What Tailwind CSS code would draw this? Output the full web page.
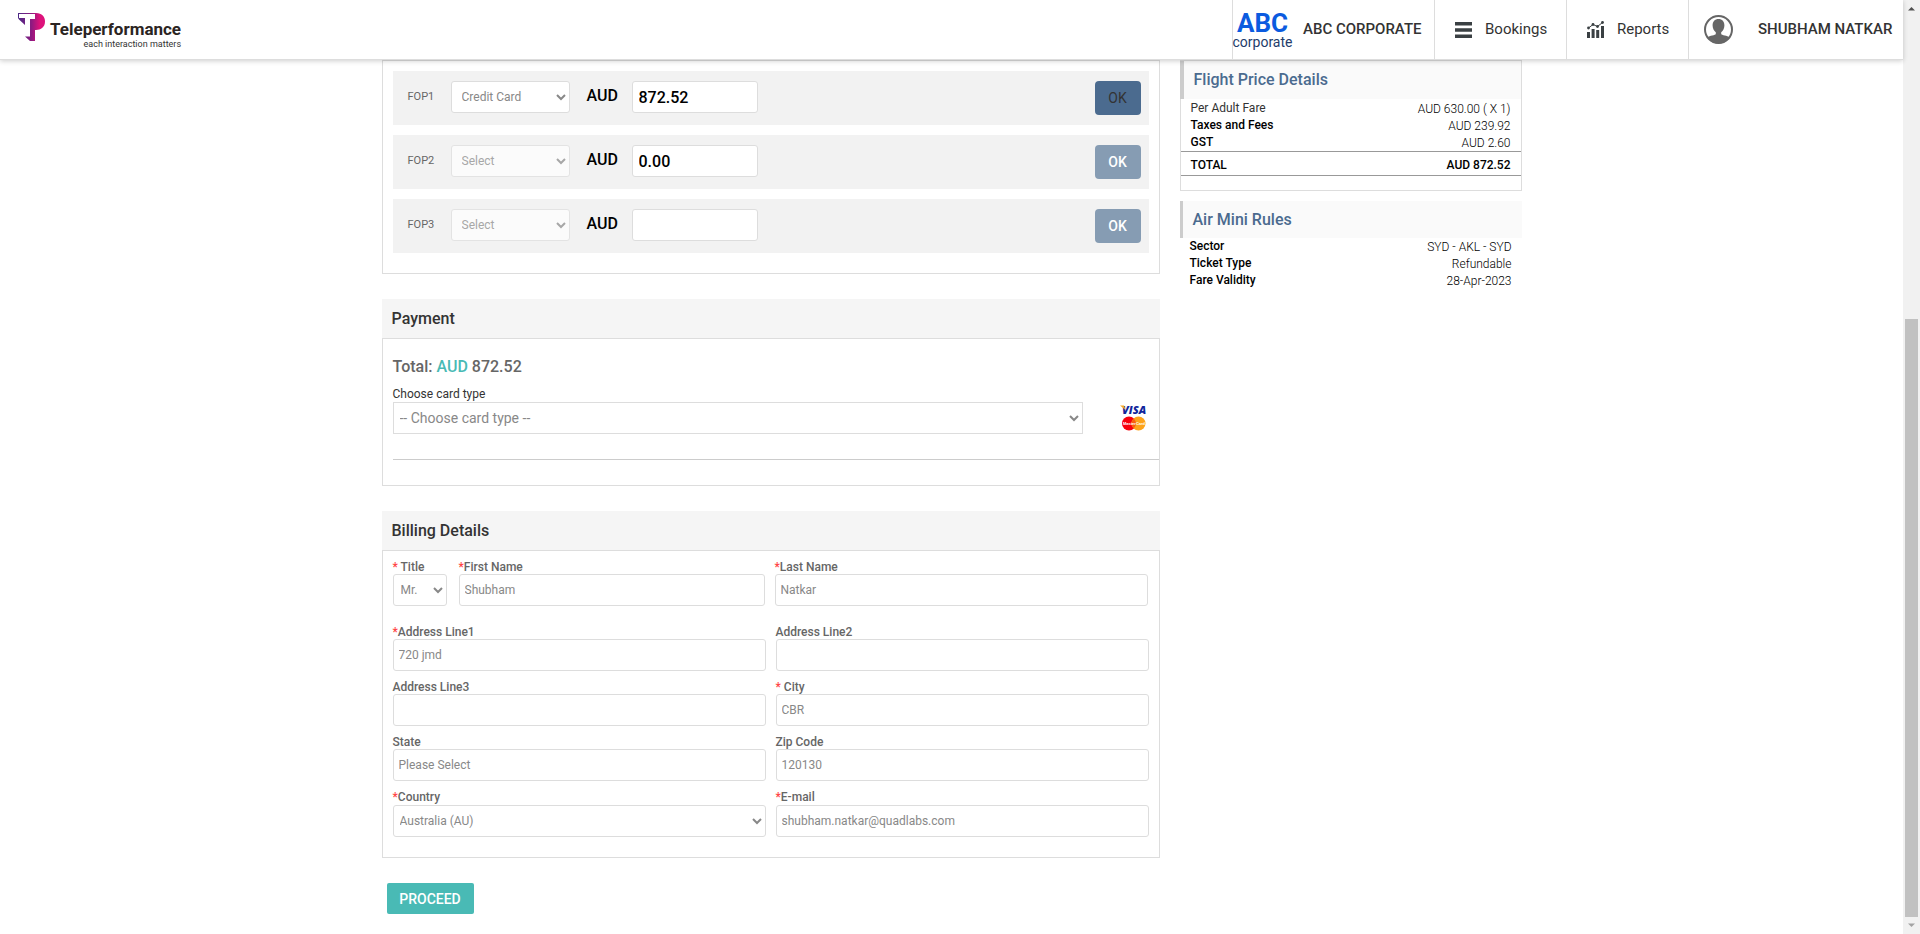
<!DOCTYPE html>
<html lang="en">
<head>
<meta charset="utf-8">
<meta name="viewport" content="width=device-width, initial-scale=1">
<title>Payment and Billing</title>
<script src="https://cdn.jsdelivr.net/npm/@tailwindcss/browser@4"></script>
</head>
<body class="flex min-h-screen bg-white font-[Roboto,'Open_Sans',sans-serif] text-xs text-[#333]">
<div class="min-w-0 flex-1">
  <header class="sticky top-0 z-10 flex h-15 items-stretch justify-between border-b border-[#ddd] bg-white shadow-[0_1px_5px_rgba(0,0,0,0.2)]">
    <a href="#" class="flex items-start gap-[5px] pt-3 pl-[18px]" aria-label="Teleperformance">
      <svg class="h-[29px] w-[27px]" viewBox="0 0 27 29">
        <defs><linearGradient id="tp" x1="0" x2="1"><stop offset="0" stop-color="#4b2a86"/><stop offset=".5" stop-color="#8e1a80"/><stop offset=".8" stop-color="#dd127b"/></linearGradient></defs>
        <path fill="url(#tp)" d="M0 1H18C24 1 27 5 27 9.500C27 15 23 18 18 18H17V29H12L7 24.500H12V7H17V2H1V6H7V13L1 7.500L0 6Z"/>
      </svg>
      <span class="flex flex-col items-end pt-[7px]">
        <span class="text-[17px] leading-5 font-bold text-[#2b2422]">Teleperformance</span>
        <span class="text-[9px] leading-[10px] text-[#333]">each interaction matters</span>
      </span>
    </a>
    <nav class="flex items-stretch text-[15px] text-[#333]">
      <a href="#" class="flex w-[202px] items-center border-l border-[#ddd]">
        <span class="flex w-[59px] flex-col items-center whitespace-nowrap">
          <span class="text-[26px] leading-6 font-bold text-[#0b5bdf]">ABC</span>
          <span class="text-sm leading-[14px] text-[#243c6b]">corporate</span>
        </span>
        <span class="pl-[11px] font-medium whitespace-nowrap">ABC CORPORATE</span>
      </a>
      <a href="#" class="flex w-[132px] items-center gap-[13px] border-l border-[#ddd] pl-5">
        <svg class="h-4 w-[17px]" viewBox="0 0 17 16" fill="#3a4043"><path d="M0 0h17v3.500H0zM0 6.200h17v3.500H0zM0 12.400h17v3.500H0z"/></svg>
        <span>Bookings</span>
      </a>
      <a href="#" class="flex w-[122px] items-center gap-[13px] border-l border-[#ddd] pl-5">
        <svg class="h-[17px] w-[17px]" viewBox="0 0 17 17" fill="#3a4043"><path d="M0 11h3v6H0zM4.600 8h3v9h-3zM9.200 9h3v8h-3zM14 5h3v12h-3z"/><path d="M1.500 7L6 3.500L10.500 5.500L15.500 1.500" fill="none" stroke="#3a4043"/><circle cx="1.500" cy="7" r="1.400"/><circle cx="6" cy="3.500" r="1.400"/><circle cx="10.500" cy="5.500" r="1.400"/><circle cx="15.500" cy="1.500" r="1.400"/></svg>
        <span>Reports</span>
      </a>
      <a href="#" class="flex w-[215px] items-center gap-[25px] border-l border-[#ddd] pl-[15px]">
        <svg class="h-[29px] w-[29px]" viewBox="0 0 29 29"><circle cx="14.500" cy="14.500" r="13.500" fill="#fff" stroke="#666" stroke-width="2"/><path fill="#666" d="M14.500 4C10.800 4 8.600 6.600 8.600 10.500C8.600 13.500 10 15.800 11.800 17.200V19C11.500 20.300 5.500 20.500 3.500 22.500C6.500 27 10.500 28.500 14.500 28.500S22.500 27 25.500 22.500C23.500 20.500 17.500 20.300 17.200 19V17.200C19 15.800 20.400 13.500 20.400 10.500C20.400 6.600 18.200 4 14.500 4Z"/></svg>
        <span class="font-medium whitespace-nowrap">SHUBHAM NATKAR</span>
      </a>
    </nav>
  </header>

  <main class="mx-auto flex max-w-[1140px] items-start gap-5">
    <form class="min-w-0 flex-1">
      <section class="flex flex-col gap-[10px] border border-[#ddd] px-[10px] pt-[10px] pb-5" aria-label="Forms of payment">
        <div class="flex items-start bg-[#f2f2f2] pt-[10px] pr-2 pb-3 pl-[15px]">
          <label for="fop1" class="w-[43px] pt-2 text-[11px] leading-4 text-[#666]">FOP1</label>
          <select id="fop1" class="h-8 w-[119px] rounded-[3px] border border-[#ddd] bg-white pl-[6px] text-[#888]"><option>Credit Card</option></select>
          <label for="amt1" class="w-[62px] pt-[5px] pl-[17px] text-base leading-5 font-medium text-black">AUD</label>
          <input id="amt1" type="text" value="872.52" class="h-8 w-[126px] rounded-[3px] border border-[#ddd] bg-white px-[6px] text-base font-medium text-black">
          <button type="button" class="-mb-0.5 ml-auto h-[34px] w-[46px] rounded bg-[#4b6b8f] text-sm text-[#333]">OK</button>
        </div>
        <div class="flex items-start bg-[#f2f2f2] pt-[10px] pr-2 pb-3 pl-[15px]">
          <label for="fop2" class="w-[43px] pt-2 text-[11px] leading-4 text-[#666]">FOP2</label>
          <select id="fop2" disabled class="h-8 w-[119px] rounded-[3px] border border-[#ddd] bg-white pl-[6px] text-[#888] opacity-70"><option>Select</option></select>
          <label for="amt2" class="w-[62px] pt-[5px] pl-[17px] text-base leading-5 font-medium text-black">AUD</label>
          <input id="amt2" type="text" value="0.00" class="h-8 w-[126px] rounded-[3px] border border-[#ddd] bg-white px-[6px] text-base font-medium text-black">
          <button type="button" class="-mb-0.5 ml-auto h-[34px] w-[46px] rounded bg-[#869cb3] text-sm font-medium text-white">OK</button>
        </div>
        <div class="flex items-start bg-[#f2f2f2] pt-[10px] pr-2 pb-3 pl-[15px]">
          <label for="fop3" class="w-[43px] pt-2 text-[11px] leading-4 text-[#666]">FOP3</label>
          <select id="fop3" disabled class="h-8 w-[119px] rounded-[3px] border border-[#ddd] bg-white pl-[6px] text-[#888] opacity-70"><option>Select</option></select>
          <label for="amt3" class="w-[62px] pt-[5px] pl-[17px] text-base leading-5 font-medium text-black">AUD</label>
          <input id="amt3" type="text" class="h-8 w-[126px] rounded-[3px] border border-[#ddd] bg-white px-[6px] text-base font-medium text-black">
          <button type="button" class="-mb-0.5 ml-auto h-[34px] w-[46px] rounded bg-[#869cb3] text-sm font-medium text-white">OK</button>
        </div>
      </section>

      <section class="mt-[25px]">
        <h2 class="bg-[#f5f5f5] px-[10px] text-base leading-[39px] font-medium text-[#333]">Payment</h2>
        <div class="border border-[#ddd] pb-[25px] pl-[10px]">
          <p class="pt-[18px] text-base leading-5 font-medium text-[#666]">Total: <span class="text-[#49bab5]">AUD</span> 872.52</p>
          <label for="card" class="block pt-[9px] leading-4">Choose card type</label>
          <div class="flex items-center pr-[11px]">
            <select id="card" class="h-8 min-w-0 flex-1 border border-[#ddd] bg-white pl-[2px] text-sm text-[#888]"><option>-- Choose card type --</option></select>
            <svg class="ml-[37px] h-7 w-7 overflow-visible" viewBox="0 0 28 28" role="img" aria-label="Visa and MasterCard">
              <text x="2" y="10" font-family="Open Sans, sans-serif" font-size="11" font-weight="800" font-style="italic" fill="#10259b">VISA</text>
              <path d="M0 1.500H4L5.500 6Z" fill="#f7a823"/>
              <circle cx="9" cy="19.500" r="7" fill="#f8000c"/><circle cx="18.500" cy="19.500" r="7" fill="#fda31a"/><path d="M13.750 14.400A7 7 0 0 1 13.750 24.600A7 7 0 0 1 13.750 14.400Z" fill="#f8600f"/>
              <text x="3" y="21" font-family="Liberation Sans, sans-serif" font-size="4" font-weight="700" fill="#fff">MasterCard</text>
            </svg>
          </div>
          <hr class="mt-[25px] border-[#ccc]">
        </div>
      </section>

      <section class="mt-[25px]">
        <h2 class="bg-[#f5f5f5] px-[10px] text-base leading-[39px] font-medium text-[#333]">Billing Details</h2>
        <div class="border border-[#ddd] px-[10px] pt-2 pb-5 text-[#888]">
          <div class="flex pr-px">
            <div class="w-[54px]"><label for="title" class="block pt-0.5 leading-[13px] font-medium text-[#666]"><span class="text-[#f44]">*</span> Title</label>
              <select id="title" class="h-8 w-full rounded-[3px] border border-[#ddd] bg-white pl-[3px]"><option>Mr.</option></select></div>
            <div class="ml-3 min-w-0 flex-1"><label for="first" class="block pt-0.5 leading-[13px] font-medium text-[#666]"><span class="text-[#f44]">*</span>First Name</label>
              <input id="first" type="text" value="Shubham" class="h-8 w-full rounded-[3px] border border-[#ddd] px-[5px]"></div>
            <div class="ml-[10px] w-[373px]"><label for="last" class="block pt-0.5 leading-[13px] font-medium text-[#666]"><span class="text-[#f44]">*</span>Last Name</label>
              <input id="last" type="text" value="Natkar" class="h-8 w-full rounded-[3px] border border-[#ddd] px-[5px]"></div>
          </div>
          <div class="mt-[18px] grid grid-cols-2 gap-x-[10px] gap-y-2">
            <div><label for="a1" class="block pt-0.5 leading-[13px] font-medium text-[#666]"><span class="text-[#f44]">*</span>Address Line1</label>
              <input id="a1" type="text" value="720 jmd" class="h-8 w-full rounded-[3px] border border-[#ddd] px-[5px]"></div>
            <div><label for="a2" class="block pt-0.5 leading-[13px] font-medium text-[#666]">Address Line2</label>
              <input id="a2" type="text" class="h-8 w-full rounded-[3px] border border-[#ddd] px-[5px]"></div>
            <div><label for="a3" class="block pt-0.5 leading-[13px] font-medium text-[#666]">Address Line3</label>
              <input id="a3" type="text" class="h-8 w-full rounded-[3px] border border-[#ddd] px-[5px]"></div>
            <div><label for="city" class="block pt-0.5 leading-[13px] font-medium text-[#666]"><span class="text-[#f44]">*</span> City</label>
              <input id="city" type="text" value="CBR" class="h-8 w-full rounded-[3px] border border-[#ddd] px-[5px]"></div>
            <div><label for="state" class="block pt-0.5 leading-[13px] font-medium text-[#666]">State</label>
              <input id="state" type="text" value="Please Select" class="h-8 w-full rounded-[3px] border border-[#ddd] px-[5px]"></div>
            <div><label for="zip" class="block pt-0.5 leading-[13px] font-medium text-[#666]">Zip Code</label>
              <input id="zip" type="text" value="120130" class="h-8 w-full rounded-[3px] border border-[#ddd] px-[5px]"></div>
            <div><label for="country" class="block pt-0.5 pb-px leading-[13px] font-medium text-[#666]"><span class="text-[#f44]">*</span>Country</label>
              <select id="country" class="h-8 w-full rounded-[3px] border border-[#ddd] bg-white pl-[2px]"><option>Australia (AU)</option></select></div>
            <div><label for="email" class="block pt-0.5 pb-px leading-[13px] font-medium text-[#666]"><span class="text-[#f44]">*</span>E-mail</label>
              <input id="email" type="email" value="shubham.natkar@quadlabs.com" class="h-8 w-full rounded-[3px] border border-[#ddd] px-[5px]"></div>
          </div>
        </div>
      </section>
      <button type="submit" class="mt-[25px] ml-[5px] block h-[31px] w-[87px] rounded-[2px] bg-[#49bab5] text-sm font-medium text-white">PROCEED</button>
    </form>

    <aside class="w-[342px] text-black">
      <section class="border border-[#ddd] pb-[14px]">
        <h2 class="-ml-px border-l-4 border-[#ccc] bg-[#fafafa] pl-[10px] text-base leading-[38px] font-medium text-[#4b6b8f]">Flight Price Details</h2>
        <table class="w-full border-collapse">
          <tbody class="leading-[17px]">
            <tr><th class="pl-[10px] text-left font-normal text-[#333]">Per Adult Fare</th><td class="pt-[3px] pr-[10px] text-right leading-[15px] font-light">AUD 630.00 ( X 1)</td></tr>
            <tr><th class="pl-[10px] text-left font-medium">Taxes and Fees</th><td class="pt-0.5 pr-[10px] text-right leading-[15px] font-light">AUD 239.92</td></tr>
            <tr><th class="pl-[10px] text-left font-medium">GST</th><td class="pt-0.5 pr-[10px] text-right leading-[15px] font-light">AUD 2.60</td></tr>
          </tbody>
          <tfoot class="border-y border-[#999] leading-5">
            <tr><th class="pt-[3px] pl-[10px] text-left font-medium">TOTAL</th><td class="pt-[3px] pr-[10px] text-right font-medium">AUD 872.52</td></tr>
          </tfoot>
        </table>
      </section>
      <section class="mt-[10px]">
        <h2 class="border-l-3 border-[#ccc] bg-[#fafafa] pl-[10px] text-base leading-[37px] font-medium text-[#4b6b8f]">Air Mini Rules</h2>
        <table class="w-full leading-[17px]">
          <tbody>
            <tr><th class="pl-[10px] text-left font-medium">Sector</th><td class="pt-0.5 pr-[10px] text-right leading-[15px] font-light">SYD - AKL - SYD</td></tr>
            <tr><th class="pl-[10px] text-left font-medium">Ticket Type</th><td class="pt-0.5 pr-[10px] text-right leading-[15px] font-light">Refundable</td></tr>
            <tr><th class="pl-[10px] text-left font-medium">Fare Validity</th><td class="pt-0.5 pr-[10px] text-right leading-[15px] font-light">28-Apr-2023</td></tr>
          </tbody>
        </table>
      </section>
    </aside>
  </main>
</div>
<div class="sticky top-0 flex h-screen w-[17px] flex-col items-center bg-[#f1f1f1]" aria-hidden="true">
  <svg class="h-[17px] w-[17px]" viewBox="0 0 17 17"><path d="M5 10.500L8.500 7L12 10.500Z" fill="#505050"/></svg>
  <div class="h-[302px]"></div>
  <div class="w-[13px] flex-1 bg-[#c1c1c1]"></div>
  <svg class="h-[17px] w-[17px]" viewBox="0 0 17 17"><path d="M5 6.500L8.500 10L12 6.500Z" fill="#a3a3a3"/></svg>
</div>
</body>
</html>
